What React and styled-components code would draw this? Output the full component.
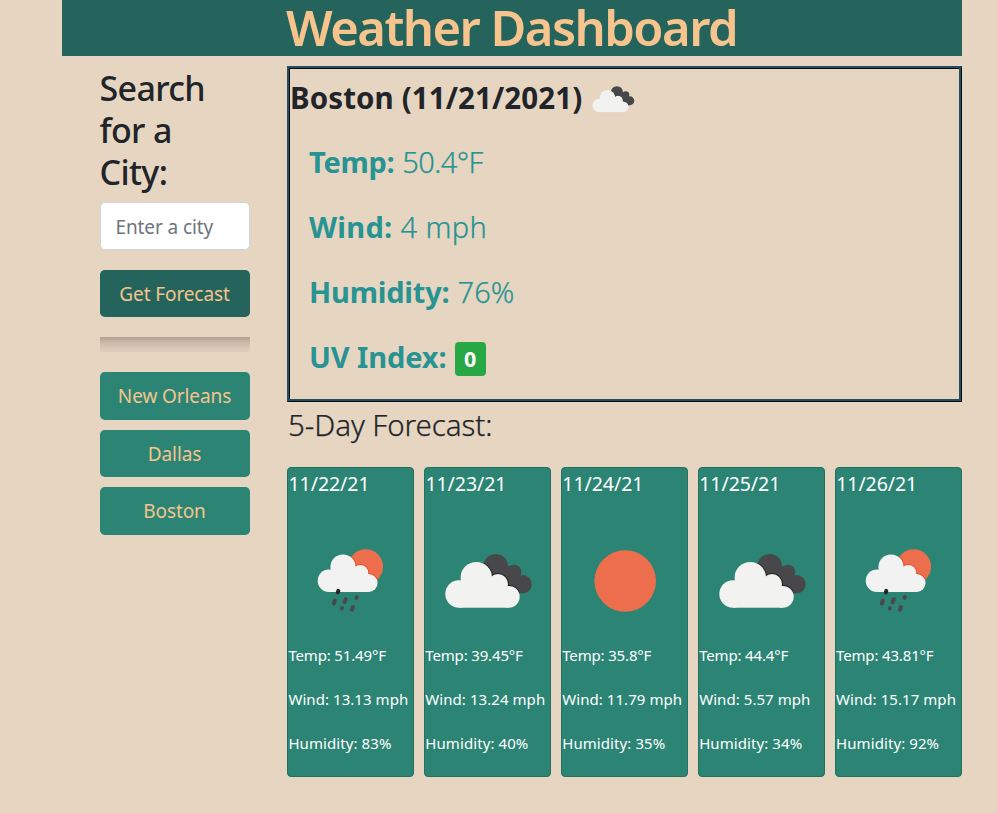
import React, { useId } from 'react';
import styled, { createGlobalStyle, css } from 'styled-components';

const GlobalStyle = createGlobalStyle`
  *, *::before, *::after { box-sizing: border-box; }
  body {
    margin: 0;
    min-height: 100vh;
    background: #e6d6c1;
    color: #212529;
    font-family: "Noto Sans", "Open Sans", sans-serif;
  }
  h1, h2, h3, h4, p { margin: 0; }
`;

const Container = styled.div`
  width: 900px;
  margin: 0 0 0 62px;
`;

const Header = styled.header`
  height: 56px;
  padding-left: 224px;
  background: #25645c;
`;

const Title = styled.h1`
  color: #f8c48e;
  font-size: 49px;
  font-weight: 600;
  line-height: 55px;
  letter-spacing: -1.55px;
  white-space: nowrap;
`;

const Columns = styled.div`
  display: grid;
  grid-template-columns: 225px 675px;
`;

const Sidebar = styled.aside`
  display: flex;
  flex-direction: column;
  padding: 11px 37.5px 0;
`;

const SearchTitle = styled.h2`
  padding-right: 20px;
  font-size: 34px;
  font-weight: 500;
  line-height: 42px;
  letter-spacing: -0.65px;
`;

const SearchForm = styled.form`
  display: flex;
  flex-direction: column;
  gap: 20px;
  margin-top: 9px;
`;

const control = css`
  width: 100%;
  height: 47.5px;
  border-radius: 4.8px;
  font-family: inherit;
  font-size: 19px;
  font-weight: 400;
`;

const CityInput = styled.input`
  ${control}
  padding: 2px 15px 0;
  border: 1px solid #ced4da;
  background: #fff;
  color: #495057;
  &::placeholder { color: #6c757d; opacity: 1; letter-spacing: -0.1px; }
`;

const Button = styled.button`
  ${control}
  padding: 1px 0 0;
  border: 0;
  background: ${(p) => (p.$primary ? '#25645c' : '#2c8574')};
  color: #f4c48c;
  letter-spacing: -0.1px;
`;

const Divider = styled.hr`
  width: 100%;
  height: 15px;
  margin: 20px 0;
  border: 0;
  background: linear-gradient(#b0a191, #c9b9a8 35%, #dccab8 80%, #dfcfbb);
`;

const History = styled.div`
  display: flex;
  flex-direction: column;
  gap: 10px;
`;

const Main = styled.main`
  padding-top: 10px;
`;

const CurrentPanel = styled.section`
  height: 336px;
  border-style: solid;
  border-width: 2px 1px 1px 2px;
  border-color: #264e62 #050b0f #050b0f #264e62;
  box-shadow: inset -2px -2px 0 #264e62, inset 1px 1px 0 #050b0f;
`;

const CurrentHeading = styled.div`
  display: flex;
  align-items: center;
  gap: 7px;
  height: 61px;
  padding: 0 0 3px 1px;
`;

const CityName = styled.h3`
  font-size: 29.5px;
  font-weight: 700;
  line-height: 45px;
  letter-spacing: 0.1px;
`;

const Stat = styled.p`
  display: flex;
  align-items: center;
  gap: 8px;
  height: 65px;
  padding-left: 20px;
  color: #279393;
  font-size: 29px;
  line-height: 45px;
`;

const StatLabel = styled.strong`
  font-weight: 700;
  letter-spacing: ${(p) => p.$tracking};
`;

const StatValue = styled.span`
  font-size: 29px;
  font-weight: 300;
  letter-spacing: ${(p) => p.$tracking};
  -webkit-text-stroke: 0.25px currentColor;
`;

const UvBadge = styled.span`
  display: inline-flex;
  align-items: center;
  justify-content: center;
  width: 31px;
  height: 34px;
  margin-top: 4px;
  border-radius: 4px;
  background: #28a745;
  color: #fff;
  font-size: 21.5px;
  font-weight: 700;
  line-height: 1;
`;

const ForecastTitle = styled.h3`
  padding-left: 1px;
  font-size: 29.5px;
  font-weight: 300;
  line-height: 45px;
  letter-spacing: -0.05px;
  -webkit-text-stroke: 0.25px currentColor;
`;

const ForecastGrid = styled.section`
  display: grid;
  grid-template-columns: repeat(5, 1fr);
  gap: 9.6px;
  margin-top: 20px;
`;

const Card = styled.article`
  display: flex;
  flex-direction: column;
  min-width: 0;
  height: 310px;
  padding-top: 4px;
  border: 1px solid #25705f;
  border-radius: 4px;
  background: #2c8574;
  color: #fff;
`;

const CardDate = styled.h4`
  padding-left: 0.5px;
  font-size: 19.5px;
  font-weight: 400;
  line-height: 24px;
  letter-spacing: -0.05px;
`;

const CardIcon = styled.div`
  display: flex;
  justify-content: center;
  margin: 35px 0 12px 0.6px;
`;

const CardStat = styled.p`
  height: 24px;
  margin-bottom: 20px;
  padding-left: 0.4px;
  font-size: 15px;
  line-height: 24px;
  letter-spacing: ${(p) => p.$tracking};
  white-space: nowrap;
`;

const Icon = styled.svg`
  display: block;
  flex: none;
  width: ${(p) => p.$size}px;
  height: ${(p) => p.$size}px;
  margin-top: ${(p) => p.$drop || 0}px;
`;

function CloudIcon({ size = 100, drop }) {
  const id = useId();
  const front = (
    <>
      <circle cx="21" cy="63" r="13.7" />
      <circle cx="38.3" cy="46.7" r="15.7" />
      <circle cx="60" cy="53" r="10" />
      <circle cx="70.8" cy="65.8" r="10.9" />
      <rect x="21" y="55" width="50" height="21.7" />
    </>
  );
  const back = (
    <>
      <circle cx="57.7" cy="35.3" r="12.3" />
      <circle cx="76" cy="41" r="7.3" />
      <circle cx="84.6" cy="53.2" r="9.1" />
      <path d="M58 35H76L84.6 53V62.3H58Z" />
    </>
  );
  return (
    <Icon viewBox="0 0 100 100" $size={size} $drop={drop}>
      <clipPath id={id}>{back}</clipPath>
      <g fill="#48484a">{back}</g>
      <g clipPath={`url(#${id})`} fill="none" stroke="#252526" strokeWidth="2">{front}</g>
      <g fill="#f2f2f0">{front}</g>
    </Icon>
  );
}

function RainIcon({ size = 100 }) {
  const id = useId();
  const cloud = (
    <>
      <circle cx="28" cy="49.7" r="11.3" />
      <circle cx="42" cy="36" r="12.6" />
      <circle cx="59.3" cy="42" r="8" />
      <circle cx="67.6" cy="52" r="9" />
      <rect x="28" y="43" width="39.6" height="18" />
    </>
  );
  return (
    <Icon viewBox="0 0 100 100" $size={size}>
      <clipPath id={id}><circle cx="64.7" cy="35.7" r="17.4" /></clipPath>
      <circle cx="64.7" cy="35.7" r="17.4" fill="#ec6e4c" />
      <g clipPath={`url(#${id})`} fill="none" stroke="#ea4a22" strokeWidth="1.8">{cloud}</g>
      <g fill="#f2f2f2">{cloud}</g>
      <g stroke="#48484a" strokeWidth="4" strokeLinecap="round">
        <path stroke="#252526" d="M37.3 59.8L36.8 61.4" />
        <path d="M33.9 69.6L32.8 72.7" />
        <path d="M44.8 68.2L43.5 71.3" />
        <path d="M55.9 66L55.5 66.7" />
        <path d="M41 77.2L40.8 77.5" />
        <path d="M52 76L50.9 78.8" />
      </g>
    </Icon>
  );
}

function SunIcon({ size = 100 }) {
  return (
    <Icon viewBox="0 0 100 100" $size={size}>
      <circle cx="50.2" cy="50" r="30.8" fill="#ec6e4c" />
    </Icon>
  );
}

const icons = { cloud: CloudIcon, rain: RainIcon, sun: SunIcon };

const days = [
  { date: '11/22/21', icon: 'rain', temp: '51.49', wind: '13.13', humidity: 83 },
  { date: '11/23/21', icon: 'cloud', temp: '39.45', wind: '13.24', humidity: 40 },
  { date: '11/24/21', icon: 'sun', temp: '35.8', wind: '11.79', humidity: 35 },
  { date: '11/25/21', icon: 'cloud', temp: '44.4', wind: '5.57', humidity: 34 },
  { date: '11/26/21', icon: 'rain', temp: '43.81', wind: '15.17', humidity: 92 },
];

const stats = [
  { label: 'Temp:', value: '50.4°F', labelTracking: '-0.3px', valueTracking: '-0.6px' },
  { label: 'Wind:', value: '4 mph', labelTracking: '0.3px', valueTracking: '0.4px' },
  { label: 'Humidity:', value: '76%', labelTracking: '-0.2px', valueTracking: '0.1px' },
];

const cities = ['New Orleans', 'Dallas', 'Boston'];

function ForecastCard({ day }) {
  const DayIcon = icons[day.icon];
  return (
    <Card>
      <CardDate>{day.date}</CardDate>
      <CardIcon><DayIcon /></CardIcon>
      <CardStat $tracking="-0.16px">Temp: {day.temp}°F</CardStat>
      <CardStat $tracking="0.06px">Wind: {day.wind} mph</CardStat>
      <CardStat $tracking="0.08px">Humidity: {day.humidity}%</CardStat>
    </Card>
  );
}

export default function App() {
  return (
    <>
      <GlobalStyle />
      <Container>
        <Header><Title>Weather Dashboard</Title></Header>
        <Columns>
          <Sidebar>
            <SearchTitle>Search for a City:</SearchTitle>
            <SearchForm onSubmit={(e) => e.preventDefault()}>
              <CityInput placeholder="Enter a city" />
              <Button $primary>Get Forecast</Button>
            </SearchForm>
            <Divider />
            <History>
              {cities.map((city) => <Button key={city}>{city}</Button>)}
            </History>
          </Sidebar>
          <Main>
            <CurrentPanel>
              <CurrentHeading>
                <CityName>Boston (11/21/2021)</CityName>
                <CloudIcon size={48.4} drop={5} />
              </CurrentHeading>
              {stats.map((stat) => (
                <Stat key={stat.label}>
                  <StatLabel $tracking={stat.labelTracking}>{stat.label}</StatLabel>
                  <StatValue $tracking={stat.valueTracking}>{stat.value}</StatValue>
                </Stat>
              ))}
              <Stat>
                <StatLabel $tracking="-0.1px">UV Index:</StatLabel>
                <UvBadge>0</UvBadge>
              </Stat>
            </CurrentPanel>
            <ForecastTitle>5-Day Forecast:</ForecastTitle>
            <ForecastGrid>
              {days.map((day) => <ForecastCard key={day.date} day={day} />)}
            </ForecastGrid>
          </Main>
        </Columns>
      </Container>
    </>
  );
}
